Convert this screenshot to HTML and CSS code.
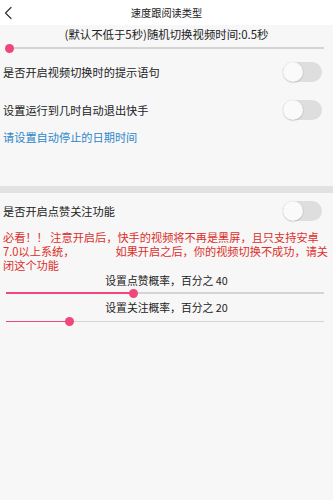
FILE: index.html
```html
<!DOCTYPE html>
<html lang="zh">
<head>
<meta charset="utf-8">
<title>速度跟阅读类型</title>
<link rel="stylesheet" href="styles.css">
</head>
<body>
<div class="page">
  <header class="topbar">
    <span class="back">
      <svg width="10" height="14" viewBox="0 0 10 14"><path d="M8 1.5 L2.5 7 L8 12.5" fill="none" stroke="#333" stroke-width="1.2" stroke-linecap="round" stroke-linejoin="round"/></svg>
    </span>
    <h1 class="title">速度跟阅读类型</h1>
    <span></span>
  </header>

  <div class="slider-label first">(默认不低于5秒)随机切换视频时间:0.5秒</div>
  <div class="slider s1">
    <div class="track"></div>
    <div class="fill" style="width:1%"></div>
    <div class="thumb" style="left:1%"></div>
  </div>

  <div class="row r1">
    <span class="row-text">是否开启视频切换时的提示语句</span>
    <span class="switch"><span class="knob"></span></span>
  </div>
  <div class="row r2">
    <span class="row-text">设置运行到几时自动退出快手</span>
    <span class="switch"><span class="knob"></span></span>
  </div>
  <div class="link">请设置自动停止的日期时间</div>
  <div class="spacer"></div>
  <div class="band"></div>

  <div class="row r3">
    <span class="row-text">是否开启点赞关注功能</span>
    <span class="switch"><span class="knob"></span></span>
  </div>
  <p class="warning">必看！！ 注意开启后，快手的视频将不再是黑屏，且只支持安卓<br>7.0以上系统，<span class="gap"></span>如果开启之后，你的视频切换不成功，请关<br>闭这个功能</p>

  <div class="slider-label l2">设置点赞概率，百分之 40</div>
  <div class="slider s2">
    <div class="track"></div>
    <div class="fill" style="width:40%"></div>
    <div class="thumb" style="left:40%"></div>
  </div>
  <div class="slider-label l3">设置关注概率，百分之 20</div>
  <div class="slider s3">
    <div class="track"></div>
    <div class="fill" style="width:20%"></div>
    <div class="thumb" style="left:20%"></div>
  </div>
</div>
</body>
</html>
```
FILE: styles.css
```css
* { box-sizing: border-box; }
html, body { margin: 0; padding: 0; }
body {
  background: #f7f7f7;
  font-family: "Noto Sans CJK SC", "Noto Sans", sans-serif;
  color: #222;
  width: 333px;
  height: 500px;
  overflow: hidden;
}
.page { display: flex; flex-direction: column; }

.topbar {
  height: 25px;
  background: #fff;
  display: grid;
  grid-template-columns: 30px 1fr 30px;
  align-items: center;
}
.back { display: flex; align-items: center; padding-left: 3px; height: 25px; }
.title {
  margin: 0;
  font-size: 10.2px;
  font-weight: normal;
  text-align: center;
  color: #222;
}

.slider-label {
  text-align: center;
  font-size: 11.2px;
  display: flex;
  align-items: center;
  justify-content: center;
}
.slider-label.first { height: 18px; font-size: 11.4px; }
.slider-label.l2 { height: 16px; font-size: 10.8px; }
.slider-label.l3 { height: 18px; font-size: 10.8px; }

.slider {
  position: relative;
  margin: 0 9px 0 6px;
  height: 10px;
}
.slider.s3 { height: 11px; }
.track {
  position: absolute;
  left: 0; right: 0;
  top: 50%;
  height: 1.5px;
  margin-top: -0.75px;
  background: #d4d4d4;
}
.fill {
  position: absolute;
  left: 0;
  top: 50%;
  height: 1.5px;
  margin-top: -0.75px;
  background: #f0467a;
}
.thumb {
  position: absolute;
  top: 50%;
  width: 9px;
  height: 9px;
  margin: -4.5px 0 0 -4.5px;
  border-radius: 50%;
  background: #f0467a;
}

.row {
  display: flex;
  align-items: center;
  justify-content: space-between;
  padding: 0 11px 0 3px;
  font-size: 11.2px;
}
.row.r1 { height: 38px; }
.row.r2 { height: 37px; }
.row.r3 { height: 36px; }

.switch {
  position: relative;
  width: 39px;
  height: 20px;
  border-radius: 10px;
  background: #dedede;
  display: flex;
  align-items: center;
}
.knob {
  width: 20px;
  height: 20px;
  border-radius: 50%;
  background: #fafafa;
  box-shadow: 0 0.5px 1.5px rgba(0,0,0,0.25);
}

.link {
  height: 18px;
  display: flex;
  align-items: center;
  padding-left: 3px;
  font-size: 11.2px;
  color: #2f86c8;
}
.spacer { height: 40px; }
.band { height: 7px; background: #e2e2e2; }

.warning {
  margin: 1px 0 0;
  padding-left: 3px;
  font-size: 11.2px;
  line-height: 14px;
  color: #dc2f2b;
  white-space: nowrap;
}
.gap { display: inline-block; width: 41px; }
```
